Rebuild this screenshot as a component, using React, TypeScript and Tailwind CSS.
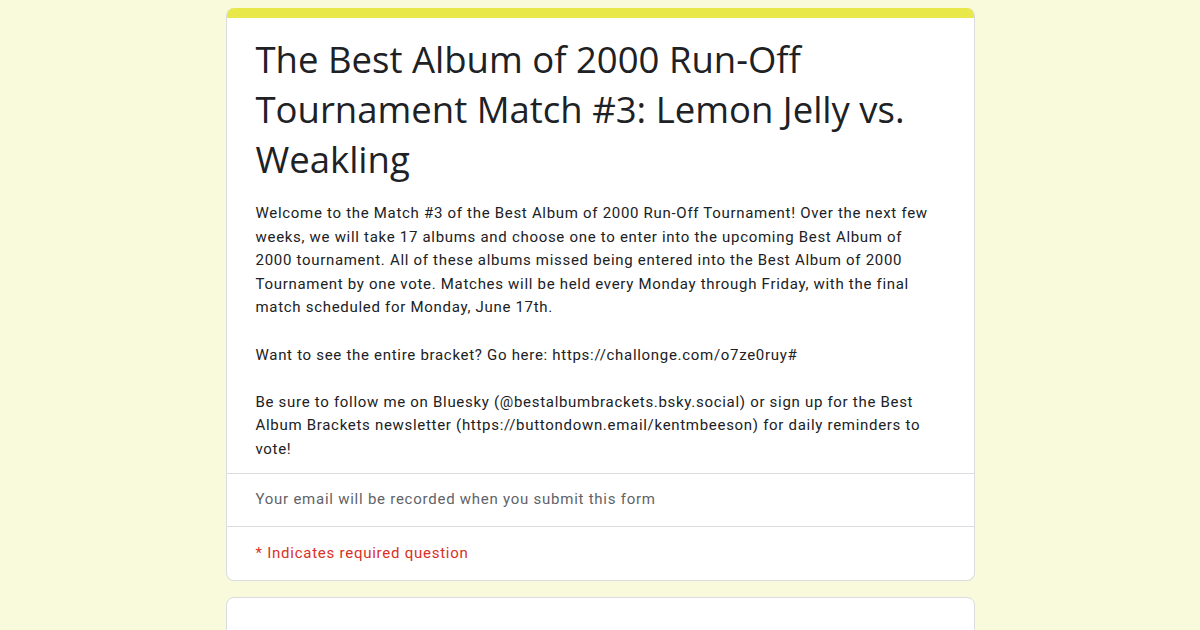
export default function App() {
  const desc = [
    'Welcome to the Match #3 of the Best Album of 2000 Run-Off Tournament! Over the next few',
    'weeks, we will take 17 albums and choose one to enter into the upcoming Best Album of',
    '2000 tournament. All of these albums missed being entered into the Best Album of 2000',
    'Tournament by one vote. Matches will be held every Monday through Friday, with the final',
    'match scheduled for Monday, June 17th.',
    '',
    'Want to see the entire bracket? Go here: https://challonge.com/o7ze0ruy#',
    '',
    'Be sure to follow me on Bluesky (@bestalbumbrackets.bsky.social) or sign up for the Best',
    'Album Brackets newsletter (https://buttondown.email/kentmbeeson) for daily reminders to',
    'vote!',
  ];

  return (
    <div className="w-[1200px] h-[630px] overflow-hidden bg-[#f9f9db] pt-2" style={{ fontFamily: 'Roboto, "Liberation Sans", sans-serif' }}>
      <div className="mx-auto w-[749px]">
        {/* header card */}
        <div className="rounded-lg overflow-hidden bg-white border border-[#dadce0] border-t-0">
          <div className="h-[10px] bg-[#e8e84a]" />
          <div className="px-[29px] pt-[16px] pb-[11px]">
            <h1
              className="text-[36.5px] leading-[50px] text-[#202124]"
              style={{ fontFamily: '"Open Sans", "Noto Sans", sans-serif' }}
            >
              The Best Album of 2000 Run-Off
              <br />
              Tournament Match #3: Lemon Jelly vs.
              <br />
              Weakling
            </h1>
            <div className="mt-[18px] text-[15px] leading-[23.6px] tracking-[0.7px] text-[#202124]">
              {desc.map((l, i) => (
                <div key={i} className="whitespace-nowrap h-[23.6px]">{l}</div>
              ))}
            </div>
          </div>
          <div className="border-t border-[#dadce0] px-[29px] h-[53px] flex items-center text-[15px] tracking-[0.75px] text-[#5f6368]">
            Your email will be recorded when you submit this form
          </div>
          <div className="border-t border-[#dadce0] px-[29px] h-[54px] flex items-center text-[15px] tracking-[0.75px] text-[#d93025]">
            * Indicates required question
          </div>
        </div>

        {/* next card */}
        <div className="mt-[16px] h-[60px] rounded-lg bg-white border border-[#dadce0]" />
      </div>
    </div>
  );
}
